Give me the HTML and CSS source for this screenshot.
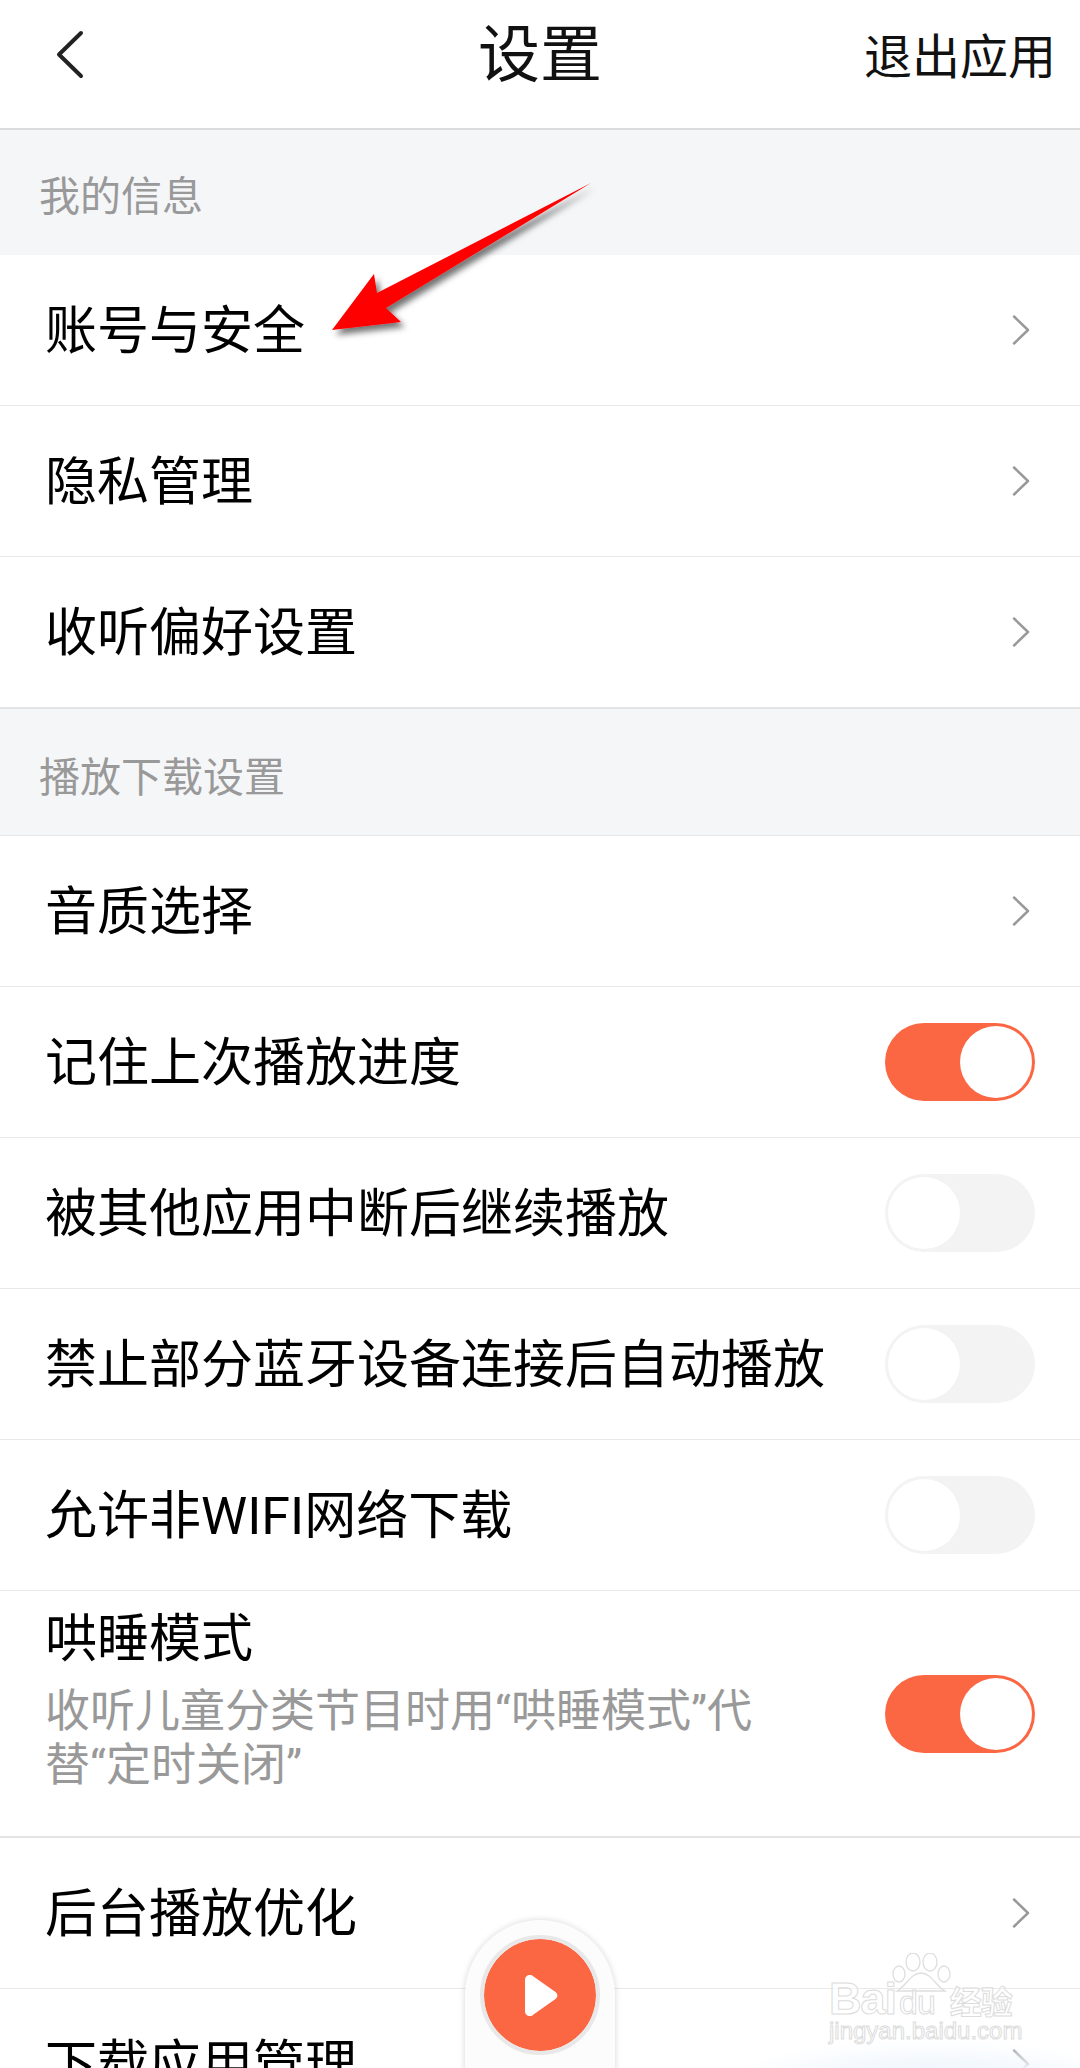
FILE: index.html
```html
<!DOCTYPE html>
<html lang="zh-CN">
<head>
<meta charset="utf-8">
<title>设置</title>
<link rel="stylesheet" href="styles.css">
</head>
<body>
<div class="page">
  <header class="topbar">
    <div class="back"><svg width="29" height="49" viewBox="0 0 29 49"><path class="back-path" d="M26 3 L4 24.500 L26 46"/></svg></div>
    <h1 class="title">设置</h1>
    <div class="exit">退出应用</div>
  </header>

  <div class="section first">我的信息</div>
  <div class="row"><span class="label">账号与安全</span><svg class="chev" width="18" height="30" viewBox="0 0 18 30"><path d="M2 1.500 L16 15 L2 28.500"/></svg></div>
  <div class="row"><span class="label">隐私管理</span><svg class="chev" width="18" height="30" viewBox="0 0 18 30"><path d="M2 1.500 L16 15 L2 28.500"/></svg></div>
  <div class="row heavy"><span class="label">收听偏好设置</span><svg class="chev" width="18" height="30" viewBox="0 0 18 30"><path d="M2 1.500 L16 15 L2 28.500"/></svg></div>

  <div class="section">播放下载设置</div>
  <div class="row"><span class="label">音质选择</span><svg class="chev" width="18" height="30" viewBox="0 0 18 30"><path d="M2 1.500 L16 15 L2 28.500"/></svg></div>
  <div class="row"><span class="label">记住上次播放进度</span><span class="toggle on"><i class="knob"></i></span></div>
  <div class="row"><span class="label">被其他应用中断后继续播放</span><span class="toggle"><i class="knob"></i></span></div>
  <div class="row"><span class="label">禁止部分蓝牙设备连接后自动播放</span><span class="toggle"><i class="knob"></i></span></div>
  <div class="row"><span class="label">允许非WIFI网络下载</span><span class="toggle"><i class="knob"></i></span></div>
  <div class="row tall">
    <div class="stack">
      <span class="label">哄睡模式</span>
      <span class="sub">收听儿童分类节目时用“哄睡模式”代替“定时关闭”</span>
    </div>
    <span class="toggle on"><i class="knob"></i></span>
  </div>
  <div class="row"><span class="label">后台播放优化</span><svg class="chev" width="18" height="30" viewBox="0 0 18 30"><path d="M2 1.500 L16 15 L2 28.500"/></svg></div>
  <div class="row"><span class="label">下载应用管理</span><svg class="chev" width="18" height="30" viewBox="0 0 18 30"><path d="M2 1.500 L16 15 L2 28.500"/></svg></div>

  <div class="glow"></div>

  <div class="player">
    <div class="disc"><svg width="36" height="43" viewBox="0 0 36 43"><path class="play" d="M7 1 C4 1 2 3 2 6 L2 37 C2 40 4 42 7 42 C8.500 42 9.500 41.500 10.500 40.500 L32.500 25 C35 23 35 20 32.500 18 L10.500 2.500 C9.500 1.500 8.500 1 7 1 Z"/></svg></div>
  </div>

  <div class="mark">
    <svg class="paw" width="60" height="46" viewBox="0 0 60 46">
      <ellipse cx="22" cy="9" rx="7" ry="9"/><ellipse cx="39" cy="9" rx="7" ry="9"/>
      <ellipse cx="8" cy="21" rx="6" ry="8"/><ellipse cx="53" cy="21" rx="6" ry="8"/>
      <path d="M30 20 C20 20 16 32 6 38 L54 38 C44 32 40 20 30 20 Z"/>
    </svg>
    <div class="mark-top"><span>Bai</span><span class="du">du</span><span class="jy">经验</span></div>
    <div class="mark-url">jingyan.baidu.com</div>
  </div>

  <svg class="arrow" width="300" height="180" viewBox="0 0 300 180">
    <defs>
      <filter id="arrow-shadow" x="-10%" y="-10%" width="125%" height="125%">
        <feDropShadow dx="4" dy="5" stdDeviation="3" flood-color="#000" flood-opacity="0.55"/>
      </filter>
    </defs>
    <path class="arrow-fill" filter="url(#arrow-shadow)" d="M271 3 L57 113 L54 94 L12 150 L81 142 L66 128 Z"/>
  </svg>
</div>
</body>
</html>
```
FILE: styles.css
```css
* { box-sizing: border-box; }
html, body { margin: 0; padding: 0; background: #fff; }
body { font-family: "Roboto", "Noto Sans CJK SC", sans-serif; color: #000; }
.page { position: relative; width: 1080px; height: 2068px; overflow: hidden; background: #fff; }

.topbar {
  display: grid;
  grid-template-columns: 1fr auto 1fr;
  align-items: start;
  height: 130px;
  padding: 0 24px;
  border-bottom: 2px solid #dcdcdc;
}
.back { padding: 30px 0 0 31px; line-height: 0; }
.back-path { fill: none; stroke: #222; stroke-width: 4; stroke-linecap: round; stroke-linejoin: round; }
.title { margin: 0; padding-top: 20px; font-size: 62px; line-height: 72px; font-weight: 400; color: #111; }
.exit { justify-self: end; padding-top: 24px; font-size: 48px; line-height: 68px; color: #111; }

.section {
  display: flex;
  align-items: center;
  height: 127px;
  padding: 3px 0 0 39px;
  font-size: 41px;
  color: #999;
  background: #f5f6f8;
  border-bottom: 1px solid #e8e8e8;
}
.section.first { height: 125px; border-bottom: 0; padding-top: 1px; }

.row {
  display: flex;
  align-items: center;
  justify-content: space-between;
  height: 151px;
  padding: 0 45px 0 45px;
  background: #fff;
  border-bottom: 1px solid #e9e9e9;
}
.row.heavy { height: 152px; border-bottom: 2px solid #e4e4e4; }
.row.tall { height: 247px; border-bottom: 2px solid #e4e4e4; align-items: flex-start; }
.label { font-size: 52px; line-height: 64px; padding-top: 4px; }

.stack { display: flex; flex-direction: column; width: 730px; padding-top: 13px; }
.sub { margin-top: 13px; font-size: 45px; line-height: 54px; color: #999; }

.chev { margin-right: 5px; flex: none; }
.chev path { fill: none; stroke: #999; stroke-width: 2.5; stroke-linecap: round; stroke-linejoin: round; }

.toggle {
  display: flex;
  flex: none;
  width: 150px;
  height: 78px;
  padding: 3px;
  border-radius: 39px;
  background: #f3f3f3;
}
.toggle.on { justify-content: flex-end; background: #fb6643; }
.row.tall .toggle { margin-top: 84px; }
.knob { display: block; width: 72px; height: 72px; border-radius: 50%; background: #fff; }

.glow {
  position: absolute;
  left: 720px;
  top: 2040px;
  width: 420px;
  height: 90px;
  border-radius: 50%;
  background: radial-gradient(closest-side, #e9f3fd 0%, #f4f9fe 55%, rgba(255,255,255,0) 100%);
}

.player {
  position: absolute;
  left: 465px;
  top: 1920px;
  width: 150px;
  height: 200px;
  padding-top: 15px;
  display: flex;
  justify-content: center;
  align-items: flex-start;
  border-radius: 75px 75px 0 0;
  background: #fcfcfc;
  box-shadow: 0 0 6px rgba(0,0,0,0.16);
}
.disc {
  display: flex;
  align-items: center;
  justify-content: center;
  width: 120px;
  height: 120px;
  padding-left: 2px;
  border-radius: 50%;
  background: #fb6643;
  border: 4px solid #e8e8e8;
  background-clip: padding-box;
}
.play { fill: #fff; }

.mark {
  position: absolute;
  left: 829px;
  top: 1953px;
  width: 200px;
  height: 92px;
  font-family: "Liberation Sans", "Noto Sans CJK SC", sans-serif;
  color: rgba(255,255,255,0.6);
  -webkit-text-stroke: 1px #dcdcdc;
}
.paw { position: absolute; left: 62px; top: 0; }
.paw ellipse, .paw path { fill: none; stroke: #dedede; stroke-width: 1.300; }
.mark-top { position: absolute; left: 0; top: 22px; display: flex; align-items: baseline; font-size: 45px; line-height: 48px; font-weight: 700; letter-spacing: -1px; }
.du { margin-left: 3px; font-size: 34px; font-weight: 400; }
.jy { margin-left: 15px; font-size: 32px; font-weight: 700; }
.mark-url { position: absolute; left: 0; top: 63px; font-size: 24px; line-height: 30px; white-space: nowrap; }

.arrow { position: absolute; left: 320px; top: 180px; }
.arrow-fill { fill: #fe0000; }
```
